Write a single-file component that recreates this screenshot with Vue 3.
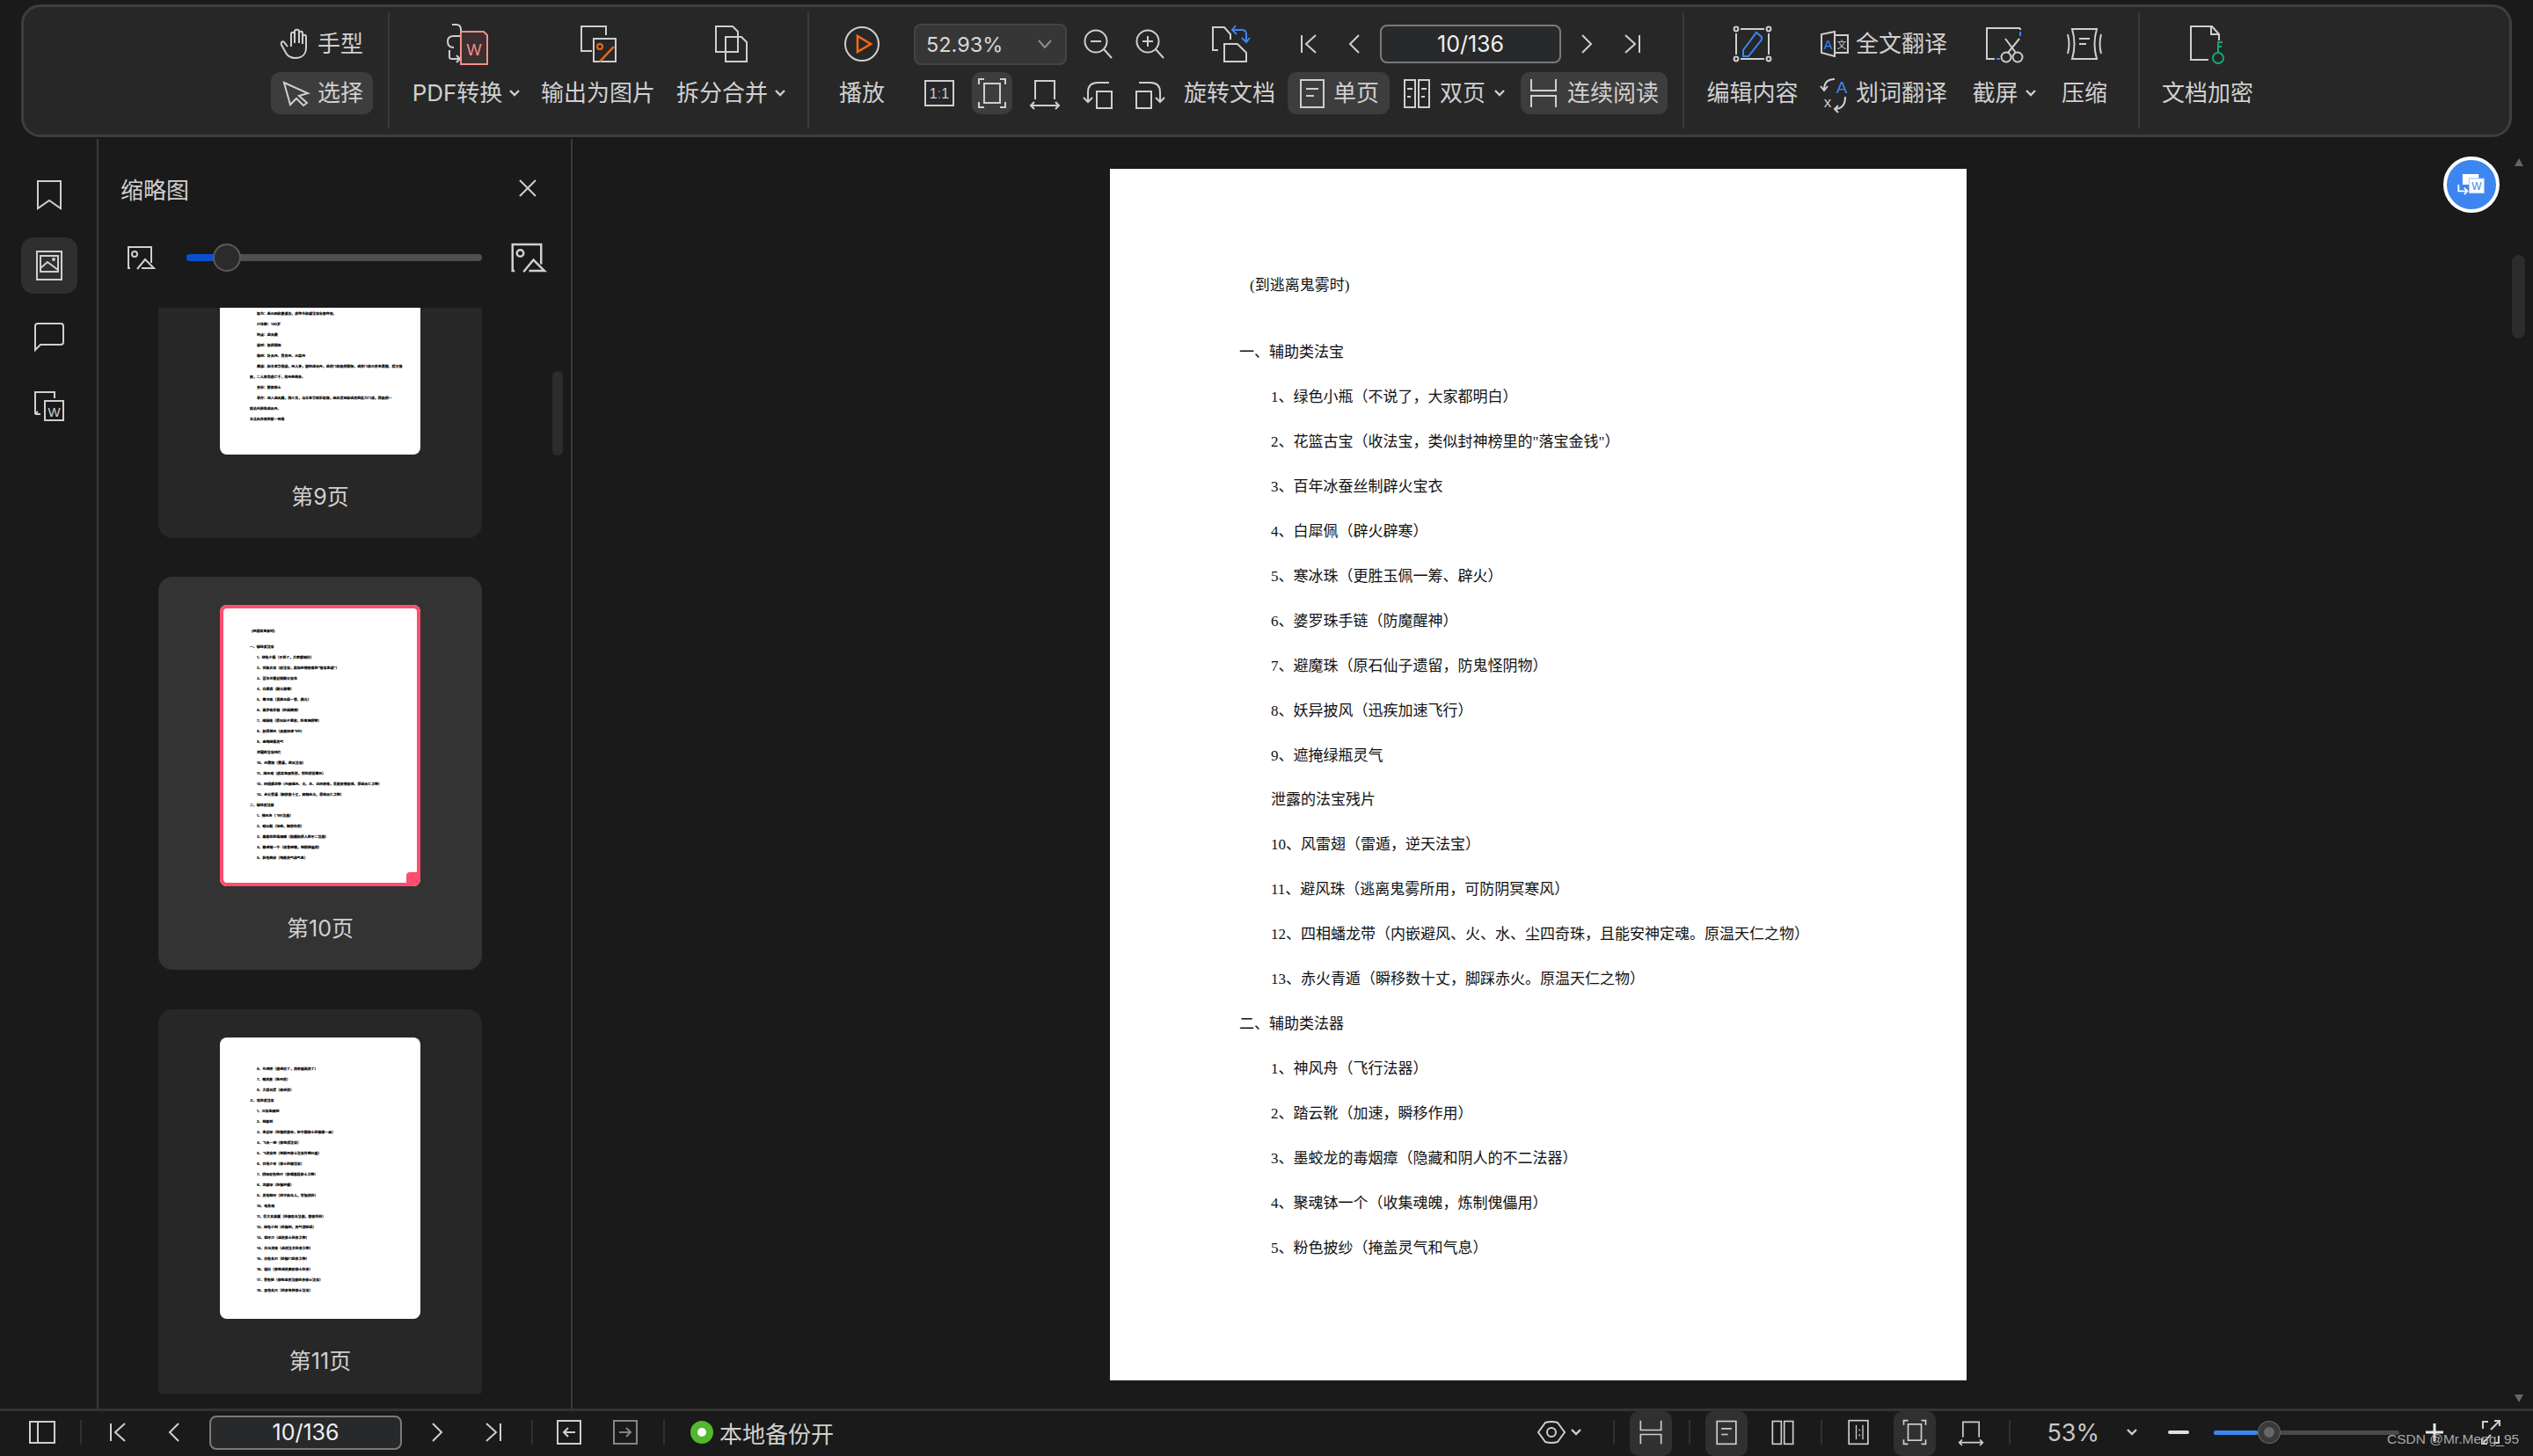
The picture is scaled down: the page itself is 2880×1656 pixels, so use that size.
<template>
  <div class="app">
    <header class="toolbar">
      <section class="grp grp-a">
        <div class="block">
          <div class="row mode"><svg class="ic" viewBox="0 0 48 48" v-html="icons.hand"></svg><span>手型</span></div>
          <div class="row mode on"><svg class="ic" viewBox="0 0 48 48" v-html="icons.cursor"></svg><span>选择</span></div>
        </div>
      </section>

      <section class="grp grp-b">
        <div class="tool t-pdf">
          <div class="row"><svg class="ic" viewBox="0 0 48 48" v-html="icons.pdf"></svg></div>
          <div class="row">PDF转换<svg class="caret" viewBox="0 0 12 8"><path d="M1 1 L6 6 L11 1" /></svg></div>
        </div>
        <div class="tool t-out">
          <div class="row"><svg class="ic" viewBox="0 0 48 48" v-html="icons.output"></svg></div>
          <div class="row">输出为图片</div>
        </div>
        <div class="tool t-split">
          <div class="row"><svg class="ic" viewBox="0 0 48 48" v-html="icons.split"></svg></div>
          <div class="row">拆分合并<svg class="caret" viewBox="0 0 12 8"><path d="M1 1 L6 6 L11 1" /></svg></div>
        </div>
      </section>

      <section class="grp grp-c">
        <div class="tool t-play">
          <div class="row"><svg class="ic" viewBox="0 0 48 48" v-html="icons.play"></svg></div>
          <div class="row">播放</div>
        </div>
        <div class="block b-zoom">
          <div class="row">
            <div class="combo"><span>52.93%</span><svg class="combo-arrow" viewBox="0 0 16 10"><path d="M1 1 L8 9 L15 1" /></svg></div>
            <div class="zoom-btns">
              <svg class="ic" viewBox="0 0 48 48" v-html="icons.zoomOut"></svg>
              <svg class="ic" viewBox="0 0 48 48" v-html="icons.zoomIn"></svg>
            </div>
          </div>
          <div class="row fit-btns">
            <div class="ib"><svg class="ic" viewBox="0 0 48 48" v-html="icons.actual"></svg></div>
            <div class="ib on"><svg class="ic" viewBox="0 0 48 48" v-html="icons.fitPage"></svg></div>
            <div class="ib"><svg class="ic" viewBox="0 0 48 48" v-html="icons.fitWidth"></svg></div>
            <div class="ib"><svg class="ic" viewBox="0 0 48 48" v-html="icons.rotL"></svg></div>
            <div class="ib"><svg class="ic" viewBox="0 0 48 48" v-html="icons.rotR"></svg></div>
          </div>
        </div>
        <div class="tool t-rotate">
          <div class="row"><svg class="ic" viewBox="0 0 48 48" v-html="icons.rotate"></svg></div>
          <div class="row">旋转文档</div>
        </div>
        <div class="block b-page">
          <div class="row nav-row">
            <svg class="ic" viewBox="0 0 48 48" v-html="icons.first"></svg>
            <svg class="ic" viewBox="0 0 48 48" v-html="icons.prev"></svg>
            <div class="page-input top-input">10/136</div>
            <svg class="ic" viewBox="0 0 48 48" v-html="icons.next"></svg>
            <svg class="ic" viewBox="0 0 48 48" v-html="icons.last"></svg>
          </div>
          <div class="row">
            <div class="view-btn on v-single"><svg class="ic" viewBox="0 0 48 48" v-html="icons.single"></svg><span>单页</span></div>
            <div class="view-btn v-double"><svg class="ic" viewBox="0 0 48 48" v-html="icons.double"></svg><span>双页</span><svg class="caret" viewBox="0 0 12 8"><path d="M1 1 L6 6 L11 1" /></svg></div>
            <div class="view-btn on v-cont"><svg class="ic" viewBox="0 0 48 48" v-html="icons.cont"></svg><span>连续阅读</span></div>
          </div>
        </div>
      </section>

      <section class="grp grp-d">
        <div class="tool t-edit">
          <div class="row"><svg class="ic" viewBox="0 0 48 48" v-html="icons.edit"></svg></div>
          <div class="row">编辑内容</div>
        </div>
        <div class="block b-trans">
          <div class="row"><svg class="ic" viewBox="0 0 48 48" v-html="icons.transFull"></svg><span>全文翻译</span></div>
          <div class="row"><svg class="ic" viewBox="0 0 48 48" v-html="icons.transWord"></svg><span>划词翻译</span></div>
        </div>
        <div class="tool t-shot">
          <div class="row"><svg class="ic" viewBox="0 0 48 48" v-html="icons.shot"></svg></div>
          <div class="row">截屏<svg class="caret" viewBox="0 0 12 8"><path d="M1 1 L6 6 L11 1" /></svg></div>
        </div>
        <div class="tool t-comp">
          <div class="row"><svg class="ic" viewBox="0 0 48 48" v-html="icons.compress"></svg></div>
          <div class="row">压缩</div>
        </div>
      </section>

      <section class="grp grp-e">
        <div class="tool">
          <div class="row"><svg class="ic" viewBox="0 0 48 48" v-html="icons.encrypt"></svg></div>
          <div class="row">文档加密</div>
        </div>
      </section>
    </header>

    <main class="main">
      <nav class="rail">
        <div class="rail-btn"><svg class="ic" viewBox="0 0 48 48" v-html="icons.bookmark"></svg></div>
        <div class="rail-btn on"><svg class="ic" viewBox="0 0 48 48" v-html="icons.thumbs"></svg></div>
        <div class="rail-btn"><svg class="ic" viewBox="0 0 48 48" v-html="icons.comment"></svg></div>
        <div class="rail-btn"><svg class="ic" viewBox="0 0 48 48" v-html="icons.toWord"></svg></div>
      </nav>

      <aside class="panel">
        <div class="panel-head">
          <span>缩略图</span>
          <svg class="close" viewBox="0 0 24 24"><path d="M3 3 L21 21 M21 3 L3 21" /></svg>
        </div>
        <div class="size-row">
          <svg class="ic pic-s" viewBox="0 0 48 48" v-html="icons.pic"></svg>
          <div class="size-track"><i class="size-fill"></i><i class="size-knob"></i></div>
          <svg class="ic pic-l" viewBox="0 0 48 48" v-html="icons.pic"></svg>
        </div>
        <div class="thumb-list">
          <div v-for="card in cards" :key="card.label" class="card" :class="{ current: card.current }">
            <div class="thumb" :class="card.cls">
              <p v-for="(line, i) in card.lines" :key="i" :class="'lv' + line.l">{{ line.t }}</p>
              <i v-if="card.current" class="thumb-corner"></i>
            </div>
            <div class="card-label">{{ card.label }}</div>
          </div>
        </div>
        <div class="panel-scroll"></div>
      </aside>

      <div class="doc">
        <article class="sheet">
          <p v-for="(line, i) in pageLines" :key="i" :class="'lv' + line.l">{{ line.t }}</p>
        </article>
        <div class="float-btn"><svg viewBox="0 0 48 48" v-html="icons.float"></svg></div>
        <i class="arr arr-up"></i>
        <div class="doc-scroll"></div>
        <i class="arr arr-down"></i>
      </div>
    </main>

    <footer class="status">
      <div class="st-left">
        <div class="ib48"><svg class="ic" viewBox="0 0 48 48" v-html="icons.panel"></svg></div>
        <i class="sep"></i>
        <div class="ib48"><svg class="ic" viewBox="0 0 48 48" v-html="icons.first"></svg></div>
        <div class="ib48"><svg class="ic" viewBox="0 0 48 48" v-html="icons.prev"></svg></div>
        <div class="page-input st-input">10/136</div>
        <div class="ib48"><svg class="ic" viewBox="0 0 48 48" v-html="icons.next"></svg></div>
        <div class="ib48"><svg class="ic" viewBox="0 0 48 48" v-html="icons.last"></svg></div>
        <i class="sep"></i>
        <div class="ib48"><svg class="ic" viewBox="0 0 48 48" v-html="icons.back"></svg></div>
        <div class="ib48 dim"><svg class="ic" viewBox="0 0 48 48" v-html="icons.forward"></svg></div>
        <i class="sep"></i>
        <div class="backup"><i class="dot"></i><span>本地备份开</span></div>
      </div>
      <div class="st-right">
        <div class="eye"><svg class="ic" viewBox="0 0 48 48" v-html="icons.eye"></svg><svg class="caret" viewBox="0 0 12 8"><path d="M1 1 L6 6 L11 1" /></svg></div>
        <i class="sep"></i>
        <div class="ib48 on sm"><svg class="ic" viewBox="0 0 48 48" v-html="icons.cont"></svg></div>
        <i class="sep"></i>
        <div class="ib48 on sm"><svg class="ic" viewBox="0 0 48 48" v-html="icons.single"></svg></div>
        <div class="ib48 sm"><svg class="ic" viewBox="0 0 48 48" v-html="icons.doubleBare"></svg></div>
        <i class="sep"></i>
        <div class="ib48 sm"><svg class="ic" viewBox="0 0 48 48" v-html="icons.actualTall"></svg></div>
        <div class="ib48 on sm"><svg class="ic" viewBox="0 0 48 48" v-html="icons.fitPage"></svg></div>
        <div class="ib48 sm"><svg class="ic" viewBox="0 0 48 48" v-html="icons.fitWidth"></svg></div>
        <i class="sep"></i>
        <span class="pct">53%</span>
        <svg class="caret pct-caret" viewBox="0 0 12 8"><path d="M1 1 L6 6 L11 1" /></svg>
        <i class="minus"></i>
        <div class="zoom-track"><i class="zoom-fill"></i><i class="zoom-knob"></i></div>
        <div class="ib48"><svg class="ic" viewBox="0 0 48 48" v-html="icons.plus"></svg></div>
        <div class="ib48"><svg class="ic" viewBox="0 0 48 48" v-html="icons.full"></svg></div>
      </div>
      <span class="mark">CSDN @Mr.Meng_95</span>
    </footer>
  </div>
</template>

<script setup>
const BLUE = '#3d86f0'
const ORANGE = '#f26a12'

const icons = {
  hand: '<path d="M14 27 L10 22 C8 20 6 22 7 25 L12 34 C14 38 17 40 23 40 C31 40 35 35 35 28 V16 C35 13 31 13 31 16 V24 M31 24 V12 C31 9 27 9 27 12 V23 M27 23 V10 C27 7 22 7 22 10 V23 M22 23 V13 C22 10 18 10 18 13 V27" />',
  cursor: '<path d="M10 12 L37 24 L27 27 L36 35 L32 38 L24 30 L17 37 Z" />',
  pdf: `<path d="M8 2 H13 Q18 2 18 8 V10 M17 15 H10 Q3 15 3 21 Q3 28 10 28 M5 31 V39 Q5 41 8 41 H16 M13 37 L17 41 L13 45" />
        <path d="M18 10 H44 L48 14 V47 H18 Z" fill="#3b2f2f" stroke="#f2908c" />
        <text x="33" y="37" text-anchor="middle" font-size="18" font-family="Liberation Sans" fill="#f2908c" stroke="none">W</text>`,
  output: `<path d="M33 14 V4 H5 V32 H17" />
        <path d="M19 18 H44 V44 H19 Z" />
        <circle cx="26" cy="27" r="3" stroke="${ORANGE}" />
        <path d="M42 27 L26 44" stroke="${ORANGE}" stroke-width="2.5" />`,
  split: `<path d="M7 4 H26 L32 10 V33 H7 Z" />
        <path d="M18 16 H36 L42 22 V44 H18 Z" />`,
  play: `<circle cx="24" cy="24" r="19" />
        <path d="M19 15 L34 24 L19 33 Z" stroke="${ORANGE}" stroke-width="2.6" />`,
  zoomOut: '<circle cx="22" cy="21" r="12.5" /><path d="M31 30 L40 40 M16 21 H28" />',
  zoomIn: '<circle cx="22" cy="21" r="12.5" /><path d="M31 30 L40 40 M16 21 H28 M22 15 V27" />',
  rotate: `<path d="M11 31 H5 V5 H18 L25 13 V19" />
        <path d="M18 24 H33 L43 34 V44 H18 Z" />
        <path d="M31 3 L27 8 L32 13 M27 8 H38 Q43 8 43 13 V22 M38 17 L43 22 L47 17" stroke="${BLUE}" />`,
  first: '<path d="M16 14 V34 M32 14 L21 24 L32 34" />',
  prev: '<path d="M29 14 L19 24 L29 34" />',
  next: '<path d="M19 14 L29 24 L19 34" />',
  last: '<path d="M16 14 L27 24 L16 34 M32 14 V34" />',
  actual: `<rect x="8" y="10" width="32" height="28" />
        <text x="24" y="30" text-anchor="middle" font-size="16" font-family="Liberation Sans" fill="#cfcfcf" stroke="none">1<tspan fill="${BLUE}">:</tspan>1</text>`,
  actualTall: `<rect x="11" y="8" width="26" height="32" />
        <path d="M21 14 V34 M30 14 V34" stroke-width="1.6" /><path d="M25.5 20 V22 M25.5 27 V29" stroke-width="2" />`,
  fitPage: '<path d="M9 14 V8 H15 M33 8 H39 V14 M39 34 V40 H33 M15 40 H9 V34" /><rect x="15" y="13" width="18" height="22" />',
  fitWidth: '<path d="M13 31 V10 H35 V31 M8 38 H40 M12 34 L8 38 L12 42 M36 34 L40 38 L36 42" />',
  rotL: '<rect x="23" y="22" width="17" height="19" /><path d="M37 12 H24 Q13 12 13 23 V34 M8 29 L13 34 L18 29" />',
  rotR: '<rect x="8" y="22" width="17" height="19" /><path d="M11 12 H24 Q35 12 35 23 V34 M30 29 L35 34 L40 29" />',
  single: '<rect x="11" y="9" width="26" height="31" /><path d="M17 19 H31 M17 27 H26" />',
  double: '<rect x="10" y="9" width="12" height="31" /><rect x="26" y="9" width="12" height="31" /><path d="M13 19 H19 M13 28 H17 M29 19 H35 M29 28 H33" />',
  doubleBare: '<rect x="10" y="9" width="12" height="31" /><rect x="26" y="9" width="12" height="31" />',
  cont: '<path d="M10 8 V21 H38 V8 M10 40 V27 H38 V40" />',
  edit: `<path d="M10 7 H37 M10 41 H37 M5 12 V36 M42 12 V36" />
        <circle cx="5" cy="7" r="2.4" /><circle cx="42" cy="7" r="2.4" /><circle cx="5" cy="41" r="2.4" /><circle cx="42" cy="41" r="2.4" />
        <path d="M13 38 V31 L28 11 L34 16 V19 L19 38 Z" stroke="${BLUE}" />`,
  transFull: `<path d="M24 10 L9 13 V34 L24 38 Z M24 14 H39 V34 H24" />
        <text x="16.5" y="30" text-anchor="middle" font-size="15" font-family="Liberation Sans" fill="${BLUE}" stroke="none">A</text>
        <text x="32" y="29" text-anchor="middle" font-size="11" font-family="Noto Sans CJK SC" fill="#cfcfcf" stroke="none">文</text>`,
  transWord: `<text x="32" y="24" text-anchor="middle" font-size="19" font-family="Liberation Sans" fill="${BLUE}" stroke="none">A</text>
        <text x="16" y="40" text-anchor="middle" font-size="17" font-family="Liberation Sans" fill="#cfcfcf" stroke="none">x</text>
        <path d="M24 8 Q12 8 12 20 M8 16 L12 21 L16 16 M36 28 Q36 42 24 42 M28 38 L24 42 L28 46" />`,
  shot: `<path d="M42 6 H4 V41 H13 M42 6 V8" />
        <path d="M42 10 V15 M15 41 H19" stroke="${BLUE}" />
        <circle cx="26" cy="39" r="5.5" /><circle cx="39" cy="39" r="5.5" />
        <path d="M28 34 L41 18 M37 34 L25 18" />`,
  compress: '<path d="M10 7 H38 Q33 24 38 41 H10 Q15 24 10 7 Z M18 18 H30 M18 24 H26 M5 13 Q8 24 5 35 M43 13 Q40 24 43 35" />',
  encrypt: `<path d="M25 42 H5 V4 H29 L37 13 V20 M28 4 V13 H37" />
        <circle cx="36" cy="40" r="6" stroke="#16a974" />
        <path d="M36 34 V22 H41 M36 27 H40" stroke="#16a974" />`,
  bookmark: '<path d="M11 8 H37 V39 L24 30 L11 39 Z" />',
  thumbs: '<rect x="10" y="8" width="28" height="32" /><rect x="14" y="13" width="20" height="18" /><path d="M14 27 L22 20 L34 29" /><circle cx="29" cy="17" r="1" />',
  comment: '<path d="M11 10 H37 Q40 10 40 13 V31 Q40 34 37 34 H14 L8 40 V13 Q8 10 11 10 Z" />',
  toWord: `<path d="M8 33 V8 H30 V15 M8 33 L11 30 M8 33 H14" />
        <path d="M19 18 H40 V40 H19 Z" />
        <text x="29.5" y="36" text-anchor="middle" font-size="15" font-family="Liberation Sans" fill="#cfcfcf" stroke="none">W</text>`,
  pic: '<path d="M13 36 H11 V12 H37 V30 M37 36 V36 M21 37 L30 26 L40 36 H26" /><circle cx="18" cy="20" r="3" />',
  float: `<path d="M13 11 H33 V16 H21 V24 H13 Z" fill="#fff" />
        <rect x="21.5" y="16.5" width="18" height="18" fill="#fff" stroke="#bcd6fb" />
        <text x="30.5" y="30" text-anchor="middle" font-size="13" font-family="Liberation Sans" fill="${BLUE}">W</text>
        <path d="M8 24 V32 H19 M15 28 L19 32 L15 36" stroke="#fff" stroke-width="2" fill="none" />`,
  panel: '<rect x="10" y="12" width="28" height="24" /><path d="M19 12 V36" />',
  back: '<rect x="11" y="11" width="26" height="26" /><path d="M31 24 H18 M23 19 L18 24 L23 29" />',
  forward: '<rect x="11" y="11" width="26" height="26" /><path d="M17 24 H30 M25 19 L30 24 L25 29" />',
  eye: '<path d="M9 24 L17 13 Q24 11 31 13 L39 24 L31 35 Q24 37 17 35 Z" /><circle cx="24" cy="24" r="5" />',
  plus: '<path d="M14 24 H34 M24 14 V34" stroke="#e8e8e8" stroke-width="3" />',
  full: '<path d="M15 20 V12 H21 M34 11 L24 21 M28 11 H34 V17 M24 27 L14 37 M14 31 V37 H20 M33 28 V36 H27" />'
}

const l = (s, lv = 1) => ({ t: s, l: lv })

const pageLines = [
  l('(到逃离鬼雾时)', 0),
  l('一、辅助类法宝', 2),
  l('1、绿色小瓶（不说了，大家都明白）'),
  l('2、花篮古宝（收法宝，类似封神榜里的"落宝金钱"）'),
  l('3、百年冰蚕丝制辟火宝衣'),
  l('4、白犀佩（辟火辟寒）'),
  l('5、寒冰珠（更胜玉佩一筹、辟火）'),
  l('6、婆罗珠手链（防魔醒神）'),
  l('7、避魔珠（原石仙子遗留，防鬼怪阴物）'),
  l('8、妖异披风（迅疾加速飞行）'),
  l('9、遮掩绿瓶灵气'),
  l('泄露的法宝残片'),
  l('10、风雷翅（雷遁，逆天法宝）'),
  l('11、避风珠（逃离鬼雾所用，可防阴冥寒风）'),
  l('12、四相蟠龙带（内嵌避风、火、水、尘四奇珠，且能安神定魂。原温天仁之物）'),
  l('13、赤火青遁（瞬移数十丈，脚踩赤火。原温天仁之物）'),
  l('二、辅助类法器', 2),
  l('1、神风舟（飞行法器）'),
  l('2、踏云靴（加速，瞬移作用）'),
  l('3、墨蛟龙的毒烟瘴（隐藏和阴人的不二法器）'),
  l('4、聚魂钵一个（收集魂魄，炼制傀儡用）'),
  l('5、粉色披纱（掩盖灵气和气息）')
]

const page9 = [
  l('极为：曲元阳和夏道友，虎符令和道法宝全部夺走。'),
  l('21年龄：140岁'),
  l('地点：虚天殿'),
  l('遇到：极阴祖师'),
  l('得到：补天丹、青灵丹、元婴丹'),
  l('遭遇：和丰金华相遇，两人争，被抓虚天丹，虚灵门和极阴祖师，虚灵门和万灵岛周旋。后又落'),
  l('败，二人联合逃亡千，用丹药脱身。', 2),
  l('身份：散修修士'),
  l('事件：进入虚天殿，闯三关，与丰金华联手取得，因此发现和虚灵的实力门派，同极阴一'),
  l('起去内阁抢虚天丹。', 2),
  l(' ', 2),
  l('本文由作者的第一视角', 2)
]

const page11 = [
  l('6、引魂钟（器魂没了，用来镇魔灵了）'),
  l('7、噬灵鼎（炼丹用）'),
  l('8、大型石斧（砍杀用）'),
  l('三、攻防类法宝', 2),
  l('1、万宝金阙剑'),
  l('2、铜鼎剑'),
  l('3、金丝甲（防御灵器甲，初中期修士防御第一品）'),
  l('4、飞天一把（修炼后法宝）'),
  l('5、飞灵宝剑（炼制丹修士法宝外围已废）'),
  l('6、白色小甲（修士防御法宝）'),
  l('7、阴阳双色钩刃（修理器具修士之物）'),
  l('8、龙鳞甲（防御护盾）'),
  l('9、灵色铜环（防守和击人，可借灵防）'),
  l('10、电鱼珠'),
  l('11、巨大玄铁盾（防御攻击法器，散修外防）'),
  l('12、绿色小剑（防御剑，灵气消耗低）'),
  l('13、金环刀（虚灵修士防身之物）'),
  l('14、白玉灵珠（虚灵法术防身之物）'),
  l('15、白色玄刃（防御门防身之物）'),
  l('16、银针（修炼虚灵高阶修士防身）'),
  l('17、青色钩（修炼虚灵法器防身修士法宝）'),
  l('18、黑色玄尺（防身各种修士法宝）')
]

const cards = [
  { label: '第9页', lines: page9, cls: 'p9' },
  { label: '第10页', lines: pageLines, cls: 'p10', current: true },
  { label: '第11页', lines: page11, cls: 'p11' }
]
</script>

<style>
html, body { margin: 0; background: #1a1a1a; }
</style>

<style scoped>
.app {
  width: 2880px; height: 1656px; overflow: hidden;
  display: flex; flex-direction: column;
  background: #1a1a1a; color: #d0d0d0;
  font-family: Inter, "Noto Sans CJK SC", sans-serif;
  font-size: 26px;
}
p { margin: 0; white-space: nowrap; }
i { display: block; }

.ic { width: 48px; height: 48px; flex: none; fill: none; stroke: #cfcfcf; stroke-width: 2; overflow: visible; }
.caret { width: 12px; height: 8px; flex: none; margin-left: 8px; fill: none; stroke: #cfcfcf; stroke-width: 2.4; }

/* toolbar */
.toolbar {
  box-sizing: border-box; height: 151px; margin: 5px 24px 0;
  display: flex; padding: 6px 0 7px;
  background: #272727; border: 3px solid #3e3e3e; border-radius: 22px;
}
.grp { box-sizing: border-box; display: flex; padding-top: 12px; border-left: 2px solid #3a3a3a; }
.grp-a { width: 414px; justify-content: flex-end; padding-right: 17px; border-left: 0; }
.grp-b { width: 477px; padding-left: 25px; }
.grp-c { width: 995px; padding-left: 35px; }
.grp-d { width: 518px; padding-left: 26px; }
.grp-e { flex: 1; padding-left: 25px; }

.block { display: flex; flex-direction: column; gap: 8px; }
.row { height: 48px; display: flex; align-items: center; white-space: nowrap; }
.row > span, .view-btn > span { margin-top: -5px; }
.tool { display: flex; flex-direction: column; align-items: center; gap: 8px; }
.tool .row:last-child { box-sizing: border-box; padding-bottom: 5px; }
.tool .row:last-child .caret { margin-top: 5px; }
.t-pdf { width: 124px; }
.t-out { width: 126px; margin-left: 25px; }
.t-split { width: 122px; margin-left: 27px; }
.t-play { width: 50px; }
.t-rotate { width: 102px; margin-left: 16px; }
.t-edit { width: 103px; }
.t-shot { width: 75px; margin-left: 29px; }
.t-comp { width: 50px; margin-left: 29px; }
.b-trans { width: 150px; margin-left: 18px; }
.b-zoom { width: 292px; margin-left: 34px; }
.b-page { width: 432px; margin-left: 15px; }

.mode { width: 116px; box-sizing: border-box; padding-left: 5px; border-radius: 10px; }
.mode.on, .ib.on, .view-btn.on { background: #3d3d3d; border-radius: 10px; }

.combo {
  box-sizing: border-box; width: 174px; height: 47px; padding: 0 14px 0 12px;
  display: flex; align-items: center; justify-content: space-between;
  background: #363636; border: 2px solid #444; border-radius: 8px;
  font-size: 23.5px; color: #d8d8d8;
}
.combo-arrow { width: 16px; height: 10px; margin-right: 1px; fill: none; stroke: #8e8e8e; stroke-width: 2; }
.zoom-btns { display: flex; gap: 11px; margin-left: 11px; }
.fit-btns { gap: 14px; padding-left: 6px; }
.ib { width: 46px; height: 48px; display: flex; align-items: center; justify-content: center; }

.page-input {
  box-sizing: border-box; display: flex; align-items: center; justify-content: center;
  background: #28292b; border: 2px solid #7a7a7a; border-radius: 8px; color: #f0f0f0;
  font-size: 25px;
}
.nav-row { gap: 4px; }
.top-input { width: 206px; height: 44px; margin: 0 1px; }
.view-btn { height: 48px; display: flex; align-items: center; }
.v-single { width: 116px; padding-left: 4px; box-sizing: border-box; }
.v-double { margin-left: 7px; width: 142px; gap: 2px; }
.v-cont { width: 167px; padding-left: 2px; box-sizing: border-box; gap: 3px; }
.v-cont span { white-space: nowrap; }

/* main area */
.main { flex: 1; min-height: 0; display: flex; margin-top: 2px; }
.rail {
  box-sizing: border-box; width: 112px; flex: none;
  display: flex; flex-direction: column; gap: 16px;
  padding: 32px 0 0 24px; border-right: 2px solid #3a3a3a;
}
.rail-btn { width: 64px; height: 64px; display: flex; align-items: center; justify-content: center; border-radius: 14px; }
.rail-btn.on { background: #2f2f2f; }

.panel {
  box-sizing: border-box; width: 539px; flex: none; position: relative;
  display: flex; flex-direction: column; border-right: 2px solid #3a3a3a;
}
.panel-head {
  display: flex; align-items: center; justify-content: space-between;
  height: 48px; margin-top: 32px; padding: 0 37px 0 25px;
}
.close { width: 24px; height: 24px; fill: none; stroke: #cfcfcf; stroke-width: 2; }
.size-row { display: flex; align-items: center; height: 60px; margin-top: 25px; padding-left: 23px; }
.pic-s { width: 48px; }
.pic-l { width: 60px; height: 60px; margin-left: 21px; }
.size-track { position: relative; width: 336px; height: 8px; margin-left: 29px; background: #505050; border-radius: 4px; }
.size-fill { width: 40px; height: 8px; background: #0a4fd0; border-radius: 4px; }
.size-knob {
  position: absolute; top: -12px; left: 30px; box-sizing: border-box;
  width: 32px; height: 32px; background: #2b2b2b; border: 2px solid #5a5a5a; border-radius: 50%;
}
.thumb-list {
  height: 1235px; margin-top: 27px; padding-left: 68px; overflow: hidden;
  display: flex; flex-direction: column; gap: 44px;
}
.thumb-list .card:first-child { margin-top: -185px; }
.thumb-list .card:last-child { margin-top: 1px; }
.card {
  box-sizing: border-box; flex: none; width: 368px; height: 447px;
  display: flex; flex-direction: column; align-items: center;
  padding-top: 32px; background: #272727; border-radius: 16px;
}
.card.current { background: #333; }
.thumb {
  box-sizing: border-box; position: relative; width: 228px; height: 320px; flex: none;
  display: flex; flex-direction: column; padding-top: 24px;
  background: #fff; border-radius: 8px; color: #000;
  font-size: 3.95px; line-height: 12px; font-weight: 700; overflow: hidden;
  -webkit-text-stroke: 0.15px #000;
}
.thumb .lv0 { padding-left: 36px; margin-bottom: 6px; }
.thumb .lv1 { padding-left: 42px; }
.thumb .lv2 { padding-left: 34px; }
.thumb.p9 { justify-content: flex-end; padding-top: 0; padding-bottom: 34px; }
.thumb.p11 { padding-top: 30px; }
.thumb.p10 { box-shadow: inset 0 0 0 4px #ff4d6d; }
.thumb-corner { position: absolute; right: 4px; bottom: 4px; width: 12px; height: 12px; background: #ff4d6d; border-top-left-radius: 4px; }
.card-label { height: 48px; margin-top: 24px; line-height: 48px; font-size: 25px; }
.panel-scroll { position: absolute; left: 516px; top: 264px; width: 12px; height: 96px; background: #2c2c2c; border-radius: 6px; }

.doc { position: relative; flex: 1; min-width: 0; padding: 34px 0 0 611px; }
.sheet {
  box-sizing: border-box; width: 974px; height: 1378px; padding-top: 108px;
  background: #fff; color: #111;
  font-family: "Liberation Serif", "Noto Sans CJK SC", serif;
  font-size: 17px; line-height: 50.95px;
}
.sheet .lv0 { padding-left: 159px; margin-bottom: 25px; }
.sheet .lv1 { padding-left: 183px; }
.sheet .lv2 { padding-left: 147px; }
.float-btn {
  position: absolute; left: 2127px; top: 20px; box-sizing: border-box;
  width: 64px; height: 64px; padding: 6px; border: 4px solid #fff; border-radius: 50%;
  background: #3d86f0;
}
.float-btn svg { display: block; width: 100%; height: 100%; }
.arr { position: absolute; left: 2208px; width: 0; height: 0; border-left: 5px solid transparent; border-right: 5px solid transparent; }
.arr-up { top: 22px; border-bottom: 9px solid #666; }
.arr-down { top: 1428px; border-top: 9px solid #666; }
.doc-scroll { position: absolute; left: 2205px; top: 132px; width: 15px; height: 95px; background: #2c2c2c; border-radius: 8px; }

/* status bar */
.status {
  position: relative; box-sizing: border-box; height: 54px; flex: none;
  display: flex; align-items: center; justify-content: space-between;
  padding: 0 24px; border-top: 3px solid #333;
}
.st-left, .st-right { height: 100%; display: flex; align-items: center; gap: 16px; }
.ib48 { width: 48px; height: 48px; display: flex; align-items: center; justify-content: center; flex: none; }
.ib48.dim .ic { stroke: #858585; }
.ib48.sm { height: 51px; border-radius: 10px; }
.ib48.sm .ic { width: 40px; height: 40px; margin-bottom: 3px; }
.ib48.on { background: #303030; }
.sep { width: 2px; height: 28px; margin: 0 1px 0 3px; background: #303030; flex: none; }
.st-input { width: 219px; height: 39px; }
.backup { display: flex; align-items: center; gap: 7px; margin-left: 12px; font-size: 26px; }
.dot { box-sizing: border-box; width: 26px; height: 26px; border-radius: 50%; background: #fff; border: 8px solid #52b82e; }
.eye { display: flex; align-items: center; width: 64px; margin-right: 11px; }
.eye .caret { margin-left: -2px; }
.pct { margin-left: 24px; font-size: 27px; color: #c8c8c8; }
.pct-caret { margin: 0 19px 0 15px; }
.minus { width: 24px; height: 4px; margin-left: 0; background: #e0e0e0; border-radius: 2px; }
.zoom-track { position: relative; width: 211px; height: 5px; margin: 0 0 0 12px; background: #4a4a4a; border-radius: 3px; }
.zoom-fill { width: 50px; height: 5px; background: #3d86f0; border-radius: 3px; }
.zoom-knob {
  position: absolute; left: 51px; top: -10px; box-sizing: border-box;
  width: 24px; height: 24px; border-radius: 50%; background: #666; border: 6px solid #3a3a3a; box-shadow: 0 0 0 1px #666;
}
.st-left > *, .st-right > * { margin-bottom: 3px; }
.st-right > .ib48.sm { margin-bottom: 0; }
.mark { position: absolute; left: 2714px; top: 23px; font-family: "Liberation Sans", sans-serif; font-size: 15.5px; color: #a8a8a8; white-space: nowrap; }
</style>
